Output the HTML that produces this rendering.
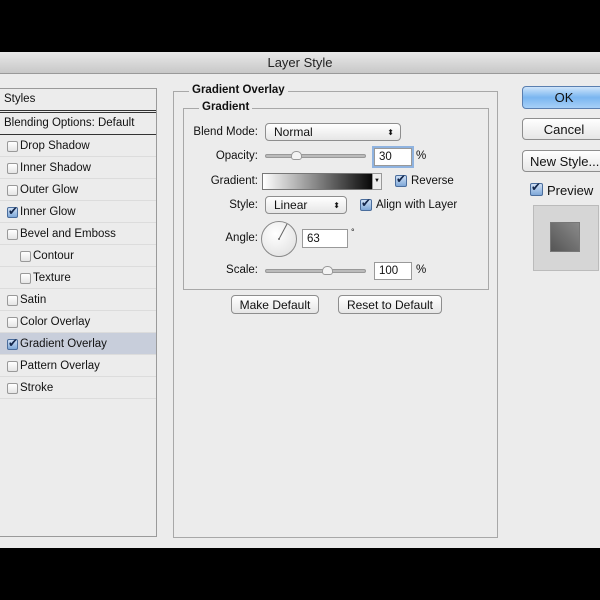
<!DOCTYPE html>
<html><head><style>
*{margin:0;padding:0;box-sizing:border-box}
body{width:600px;height:600px;background:#000;position:relative;overflow:hidden;font-family:"Liberation Sans",sans-serif;font-size:11.5px;color:#111}
.a{position:absolute}
.dlg{left:0;top:52px;width:600px;height:496px;background:#ececec}
.title{left:0;top:52px;width:600px;height:22px;background:linear-gradient(#e8e8e8,#c8c8c8);border-bottom:1px solid #999;text-align:center;line-height:22px;font-size:13px;color:#222}
.lp{left:-2px;top:88px;width:159px;height:449px;border:1px solid #9a9a9a;background:#ececec}
.row{position:absolute;left:0;width:157px;height:22px;border-bottom:1px solid #dcdcdc;line-height:23px}
.cb{position:absolute;width:11px;height:11px;border:1px solid #999;border-radius:2px;background:linear-gradient(#fff,#e4e4e4)}
.row .cb{top:6px}
.ck{background:linear-gradient(#cfe0f5,#7fa8d8);border-color:#4a6d9c}
.ck:after{content:"✔";position:absolute;left:0px;top:-4px;font-size:12px;line-height:normal;color:#13264a}
.btn{position:absolute;border:1px solid #8e8e8e;border-radius:4px;background:linear-gradient(#fff,#e6e6e6);text-align:center;font-size:12px}
.grp{position:absolute;border:1px solid #a8a8a8}
.lbl{position:absolute;font-weight:bold;background:#ececec;padding:0 3px}
.r{position:absolute;text-align:right}
.in{position:absolute;background:#fff;border:1px solid #999;padding-left:4px;line-height:16px}
.sl{position:absolute;height:4px;border-radius:2px;background:#bbb;border:1px solid #999}
.th{position:absolute;width:11px;height:9px;background:#f4f4f4;border:1px solid #999;border-radius:5px 5px 3px 3px}
</style></head><body>
<div class="a dlg"></div>
<div class="a title">Layer Style</div>
<div class="a lp">
 <div class="row" style="top:0;height:24px;border-bottom:3px double #333;padding-left:5px;line-height:20px">Styles</div>
 <div class="row" style="top:24px;height:22px;border-bottom:1px solid #333;padding-left:5px;line-height:21px">Blending Options: Default</div>
 <div class="row" style="top:46px"><span class="cb" style="left:8px"></span><span style="position:absolute;left:21px">Drop Shadow</span></div>
 <div class="row" style="top:68px"><span class="cb" style="left:8px"></span><span style="position:absolute;left:21px">Inner Shadow</span></div>
 <div class="row" style="top:90px"><span class="cb" style="left:8px"></span><span style="position:absolute;left:21px">Outer Glow</span></div>
 <div class="row" style="top:112px"><span class="cb ck" style="left:8px"></span><span style="position:absolute;left:21px">Inner Glow</span></div>
 <div class="row" style="top:134px"><span class="cb" style="left:8px"></span><span style="position:absolute;left:21px">Bevel and Emboss</span></div>
 <div class="row" style="top:156px"><span class="cb" style="left:21px"></span><span style="position:absolute;left:34px">Contour</span></div>
 <div class="row" style="top:178px"><span class="cb" style="left:21px"></span><span style="position:absolute;left:34px">Texture</span></div>
 <div class="row" style="top:200px"><span class="cb" style="left:8px"></span><span style="position:absolute;left:21px">Satin</span></div>
 <div class="row" style="top:222px"><span class="cb" style="left:8px"></span><span style="position:absolute;left:21px">Color Overlay</span></div>
 <div class="row" style="top:244px;background:#c8cedb"><span class="cb ck" style="left:8px"></span><span style="position:absolute;left:21px">Gradient Overlay</span></div>
 <div class="row" style="top:266px"><span class="cb" style="left:8px"></span><span style="position:absolute;left:21px">Pattern Overlay</span></div>
 <div class="row" style="top:288px"><span class="cb" style="left:8px"></span><span style="position:absolute;left:21px">Stroke</span></div>
</div>

<div class="grp" style="left:173px;top:91px;width:325px;height:447px"></div>
<div class="lbl" style="left:189px;top:84px">Gradient Overlay</div>
<div class="grp" style="left:183px;top:108px;width:306px;height:182px"></div>
<div class="lbl" style="left:199px;top:101px">Gradient</div>

<div class="r" style="left:180px;top:126px;width:78px">Blend Mode:</div>
<div class="btn" style="left:265px;top:123px;width:136px;height:18px;text-align:left;padding-left:8px;line-height:17px">Normal<span style="position:absolute;right:6px;font-size:8px">⬍</span></div>

<div class="r" style="left:180px;top:150px;width:78px">Opacity:</div>
<div class="sl" style="left:265px;top:154px;width:101px"></div>
<div class="th" style="left:291px;top:151px"></div>
<div class="in" style="left:374px;top:148px;width:38px;height:18px;box-shadow:0 0 0 2px #8fb3e0;line-height:17px">30</div>
<div class="a" style="left:416px;top:150px">%</div>

<div class="r" style="left:180px;top:175px;width:78px">Gradient:</div>
<div class="a" style="left:262px;top:173px;width:120px;height:17px;border:1px solid #777;background:linear-gradient(90deg,#fff,#000 95%);"></div>
<div class="a" style="left:372px;top:173px;width:10px;height:17px;background:#eee;border:1px solid #999;font-size:6px;text-align:center;line-height:15px">▼</div>
<span class="cb ck" style="left:395px;top:175px;width:12px;height:12px"></span>
<div class="a" style="left:411px;top:175px">Reverse</div>

<div class="r" style="left:180px;top:199px;width:78px">Style:</div>
<div class="btn" style="left:265px;top:196px;width:82px;height:18px;text-align:left;padding-left:8px;line-height:17px">Linear<span style="position:absolute;right:6px;font-size:8px">⬍</span></div>
<span class="cb ck" style="left:360px;top:199px;width:12px;height:12px"></span>
<div class="a" style="left:376px;top:199px">Align with Layer</div>

<div class="r" style="left:180px;top:232px;width:78px">Angle:</div>
<div class="a" style="left:261px;top:221px;width:36px;height:36px;border-radius:50%;border:1px solid #888;background:radial-gradient(circle at 40% 35%,#fff,#ddd)"></div>
<svg class="a" style="left:261px;top:221px" width="36" height="36"><line x1="18" y1="18" x2="26" y2="3" stroke="#666" stroke-width="1"/><circle cx="18" cy="18" r="1" fill="#666"/></svg>
<div class="in" style="left:302px;top:229px;width:46px;height:19px;line-height:18px">63</div>
<div class="a" style="left:351px;top:227px;font-size:9px">°</div>

<div class="r" style="left:180px;top:264px;width:78px">Scale:</div>
<div class="sl" style="left:265px;top:269px;width:101px"></div>
<div class="th" style="left:322px;top:266px"></div>
<div class="in" style="left:374px;top:262px;width:38px;height:18px;line-height:17px">100</div>
<div class="a" style="left:416px;top:264px">%</div>

<div class="btn" style="left:231px;top:295px;width:88px;height:19px;line-height:18px">Make Default</div>
<div class="btn" style="left:338px;top:295px;width:104px;height:19px;line-height:18px">Reset to Default</div>

<div class="btn" style="left:522px;top:86px;width:84px;height:23px;line-height:22px;font-size:13px;background:linear-gradient(#cfe5fb,#7ab6f0 50%,#a7d0f7);border-color:#5a7fb0">OK</div>
<div class="btn" style="left:522px;top:118px;width:84px;height:22px;line-height:21px;font-size:13px">Cancel</div>
<div class="btn" style="left:522px;top:150px;width:84px;height:22px;line-height:21px;font-size:13px;text-align:left;padding-left:7px">New Style...</div>
<span class="cb ck" style="left:530px;top:183px;width:13px;height:13px"></span>
<div class="a" style="left:547px;top:183px;font-size:13px">Preview</div>
<div class="a" style="left:533px;top:205px;width:66px;height:66px;background:#d6d6d6;border:1px solid #bbb"></div>
<div class="a" style="left:550px;top:222px;width:30px;height:30px;background:linear-gradient(225deg,#8a8a8a,#555);border:1px solid #777"></div>
</body></html>
